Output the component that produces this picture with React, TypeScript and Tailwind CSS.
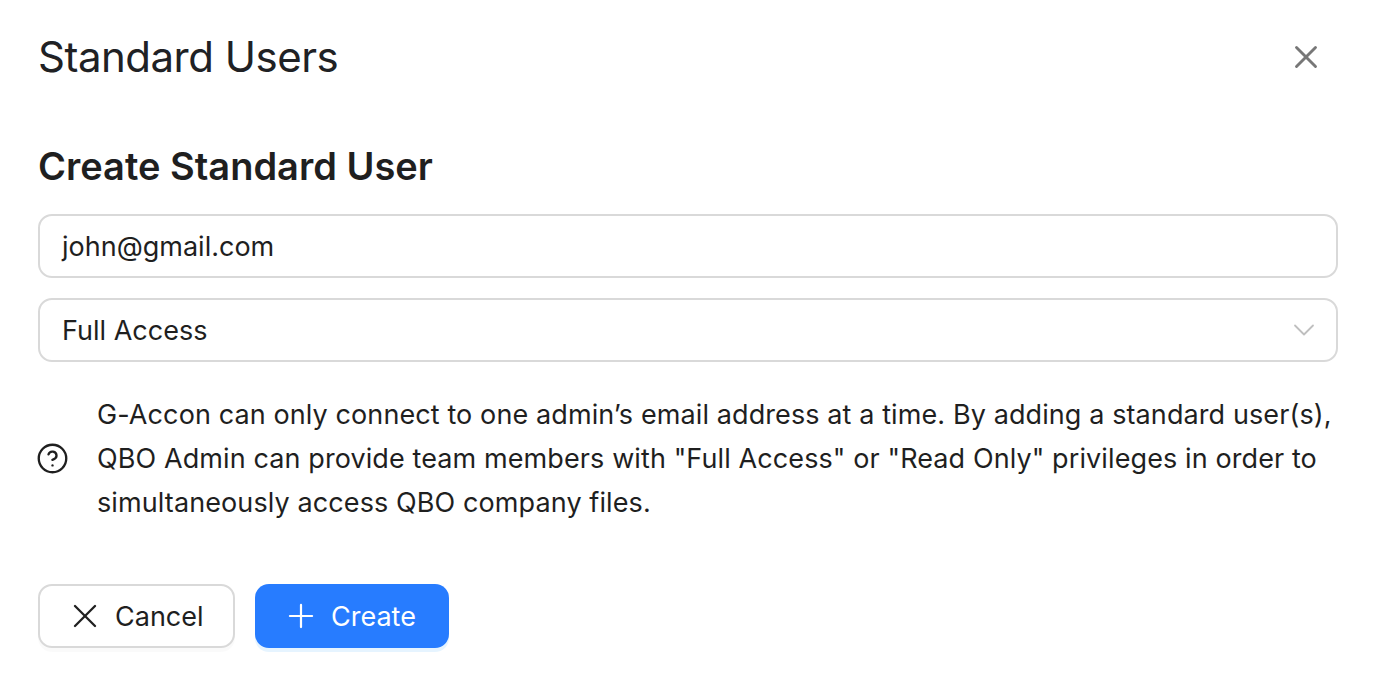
import { ChevronDown, CircleHelp, Plus, X } from "lucide-react";

export default function App() {
  return (
    <div className="min-h-[686px] bg-white px-[38px] pt-[30px] font-['Inter',sans-serif] text-[#1f1f1f]">
      {/* Title bar */}
      <div className="flex h-[54px] items-center justify-between">
        <h1 className="text-[42px] font-normal leading-[54px] tracking-[-0.5px] text-[#202124]">Standard Users</h1>
        <button className="mr-[13px] text-[#777777]">
          <X size={38} strokeWidth={1.8} />
        </button>
      </div>

      <h2 className="mt-[56px] text-[38px] font-semibold leading-[52px]">Create Standard User</h2>

      <div className="mt-[22px] flex h-[64px] items-center rounded-[14px] border-2 border-[#d9d9d9] px-[22px] pt-[2px] text-[27px]">
        john@gmail.com
      </div>

      <div className="mt-[20px] flex h-[64px] items-center justify-between rounded-[14px] border-2 border-[#d9d9d9] pl-[22px] pr-[14px] text-[27px]">
        <span className="pt-[2px]">Full Access</span>
        <ChevronDown size={36} strokeWidth={1.2} className="text-[#bfbfbf]" />
      </div>

      {/* Help note */}
      <div className="mt-[31px] flex items-center gap-[28px]">
        <CircleHelp size={33} strokeWidth={1.7} className="-ml-[2px] mb-[2px] shrink-0 text-[#1f1f1f]" />
        <p className="text-[27px] leading-[44px] tracking-[0.1px]">
          G-Accon can only connect to one admin’s email address at a time. By adding a standard user(s), QBO Admin can
          provide team members with "Full Access" or "Read Only" privileges in order to simultaneously access QBO
          company files.
        </p>
      </div>

      <div className="mt-[59px] flex gap-[20px]">
        <button className="flex h-[64px] w-[197px] items-center gap-[10px] rounded-[14px] border-2 border-[#d9d9d9] bg-white pl-[25px] text-[27px] shadow-[0_4px_0_rgba(0,0,0,0.02)]">
          <X size={40} strokeWidth={1.4} />
          <span className="pt-[2px]">Cancel</span>
        </button>
        <button className="flex h-[64px] w-[194px] items-center gap-[11px] rounded-[14px] bg-[#277cff] pl-[27px] text-[27px] text-white shadow-[0_4px_0_rgba(5,145,255,0.1)]">
          <Plus size={38} strokeWidth={1.4} />
          <span className="pt-[2px]">Create</span>
        </button>
      </div>
    </div>
  );
}
